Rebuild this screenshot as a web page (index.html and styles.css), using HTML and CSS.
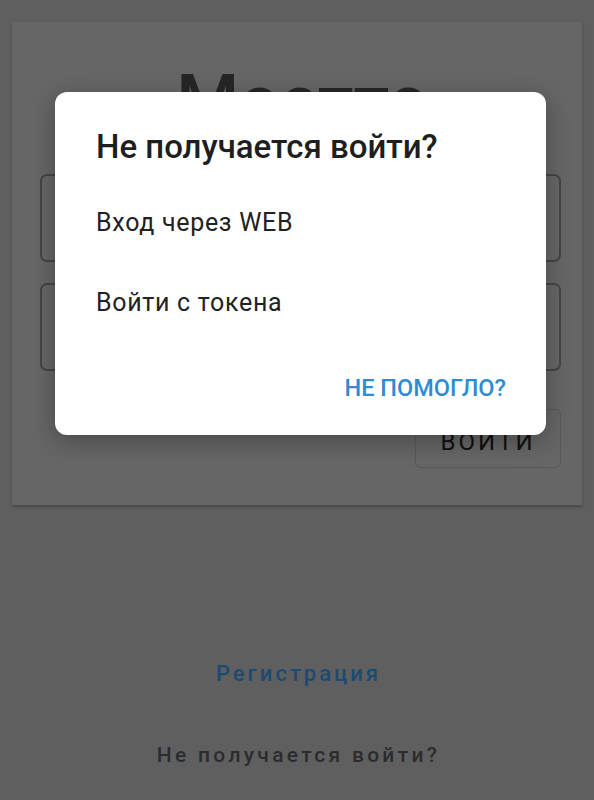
FILE: index.html
```html
<!DOCTYPE html>
<html lang="ru">
<head>
<meta charset="utf-8">
<link rel="stylesheet" href="styles.css">
</head>
<body>
<div class="page">
  <div class="card">
    <div class="brand">Мостто</div>
    <div class="field"></div>
    <div class="field"></div>
    <div class="actions"><div class="login-btn">ВОЙТИ</div></div>
  </div>
  <div class="links">
    <div class="reg">Регистрация</div>
    <div class="help">Не получается войти?</div>
  </div>
</div>
<div class="dialog">
  <div class="dlg-title">Не получается войти?</div>
  <div class="dlg-item">Вход через WEB</div>
  <div class="dlg-item">Войти с токена</div>
  <div class="dlg-actions"><span class="dlg-btn">НЕ ПОМОГЛО?</span></div>
</div>
</body>
</html>
```
FILE: styles.css
```css
html, body {
  margin: 0;
  padding: 0;
}
body {
  width: 594px;
  height: 800px;
  background: #5f5f5f;
  font-family: Roboto, "Noto Sans", sans-serif;
  position: relative;
  overflow: hidden;
}
.page {
  padding-top: 22px;
}
.card {
  margin: 0 12px;
  height: 483px;
  box-sizing: border-box;
  background: #666666;
  box-shadow: 0 2px 3px rgba(0,0,0,0.25);
  padding: 0 21px 0 28px;
  display: flex;
  flex-direction: column;
}
.brand {
  height: 152px;
  font-size: 72px;
  font-weight: 500;
  color: #262626;
  text-align: center;
  line-height: 160px;
  padding-left: 4px;
}
.field {
  height: 88px;
  box-sizing: border-box;
  border: 2px solid #454545;
  border-radius: 7px;
  margin-bottom: 21px;
}
.actions {
  display: flex;
  justify-content: flex-end;
  margin-top: 17px;
}
.login-btn {
  width: 146px;
  height: 59px;
  box-sizing: border-box;
  border: 1px solid #585858;
  border-radius: 6px;
  display: flex;
  align-items: center;
  justify-content: center;
  font-size: 24px;
  letter-spacing: 3px;
  color: #111;
  padding-top: 6px;
}
.links {
  display: flex;
  flex-direction: column;
  align-items: center;
  padding-top: 157px;
}
.reg {
  font-size: 22px;
  letter-spacing: 3px;
  color: #1d4a72;
  font-weight: 500;
  line-height: 24px;
  padding-left: 3px;
}
.help {
  margin-top: 57px;
  font-size: 21px;
  letter-spacing: 3.3px;
  color: #2c2c2c;
  font-weight: 500;
  line-height: 24px;
  padding-left: 3px;
}
.dialog {
  position: absolute;
  left: 55px;
  top: 92px;
  width: 491px;
  height: 343px;
  box-sizing: border-box;
  background: #fff;
  border-radius: 12px;
  box-shadow: 0 6px 24px rgba(0,0,0,0.3);
  padding: 36px 40px 0 41px;
}
.dlg-title {
  font-size: 33px;
  font-weight: 500;
  line-height: 38px;
  height: 38px;
  color: #1e1e1e;
  margin-bottom: 16px;
}
.dlg-item {
  height: 80px;
  display: flex;
  align-items: center;
  font-size: 25px;
  letter-spacing: 0.7px;
  color: #222;
}
.dlg-actions {
  height: 52px;
  margin-top: 20px;
  display: flex;
  align-items: center;
  justify-content: flex-end;
}
.dlg-btn {
  font-size: 23.5px;
  font-weight: 500;
  color: #2f8bd3;
}
```
